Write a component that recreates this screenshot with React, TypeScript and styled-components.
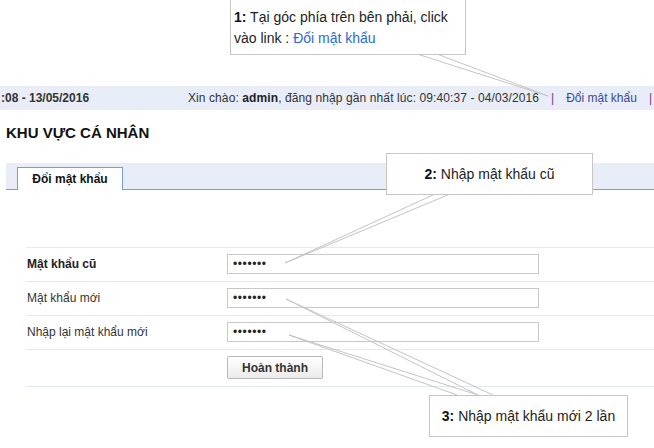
import React from "react";
import styled, { createGlobalStyle } from "styled-components";

const Global = createGlobalStyle`
  html, body { margin: 0; padding: 0; background: #fff; }
  body {
    font-family: "Liberation Sans", Arial, sans-serif;
    font-size: 12px;
    color: #333;
  }
`;

const Page = styled.div`
  position: relative;
  width: 654px;
  height: 448px;
  overflow: hidden;
  padding-top: 86px;
  box-sizing: border-box;
`;

const TopBar = styled.div`
  height: 24px;
  background: #e8edf8;
  display: flex;
  align-items: center;
  justify-content: space-between;
  padding: 0 2px 0 1px;
  white-space: nowrap;
  color: #333;
`;

const DateText = styled.span`
  font-weight: bold;
  font-size: 12px;
`;

const UserInfo = styled.div`
  display: flex;
  align-items: center;
`;

const Greeting = styled.span`
  letter-spacing: 0.1px;
`;

const Strong = styled.b`
  font-weight: bold;
  color: #222;
`;

const Sep = styled.span<{ $last?: boolean }>`
  color: #7a3a86;
  margin: ${(p) => (p.$last ? "0 0 0 12px" : "0 12px")};
`;

const TopLink = styled.a`
  color: #3a4a92;
  text-decoration: none;
`;

const Title = styled.h1`
  margin: 14px 0 0 6px;
  font-size: 15px;
  line-height: 18px;
  font-weight: bold;
  color: #111;
`;

const TabBar = styled.div`
  margin: 21px 0 0 6px;
  height: 27px;
  box-sizing: border-box;
  background: #e8edf8;
  border-bottom: 1px solid #7b9ad8;
  display: flex;
  align-items: flex-end;
  padding-left: 11px;
`;

const Tab = styled.div`
  width: 106px;
  height: 23px;
  box-sizing: border-box;
  margin-bottom: -1px;
  background: #fff;
  border: 1px solid #7b9ad8;
  border-bottom: none;
  display: flex;
  align-items: center;
  justify-content: center;
  font-weight: bold;
  color: #111;
`;

const Form = styled.div`
  margin: 57px 0 0 26px;
  border-bottom: 1px solid #e4e9f5;
`;

const Row = styled.div`
  display: grid;
  grid-template-columns: 201px 312px;
  align-items: center;
  border-top: 1px solid #e4e9f5;
  padding: 6px 0 7px;
`;

const Label = styled.label<{ $strong?: boolean }>`
  padding-left: 1px;
  font-weight: ${(p) => (p.$strong ? "bold" : "normal")};
  color: ${(p) => (p.$strong ? "#222" : "#333")};
`;

const Input = styled.input`
  width: 312px;
  height: 20px;
  box-sizing: border-box;
  border: 1px solid #c8c8c8;
  padding: 0 5px;
  margin: 0;
  font-family: "Liberation Sans", Arial, sans-serif;
  font-size: 12px;
  letter-spacing: 0.6px;
  color: #222;
  outline: none;
`;

const Button = styled.button`
  grid-column: 2;
  justify-self: start;
  width: 96px;
  height: 23px;
  border: 1px solid #b9b9b9;
  border-radius: 2px;
  background: linear-gradient(#ffffff, #ebebeb);
  font-family: "Liberation Sans", Arial, sans-serif;
  font-size: 12px;
  font-weight: bold;
  color: #333;
  padding: 0;
  cursor: pointer;
`;

const Pointers = styled.svg`
  position: absolute;
  left: 0;
  top: 0;
  pointer-events: none;
`;

const Callout = styled.div<{ $left: number; $top: number; $w: number; $h: number; $center?: boolean }>`
  position: absolute;
  left: ${(p) => p.$left}px;
  top: ${(p) => p.$top}px;
  width: ${(p) => p.$w}px;
  height: ${(p) => p.$h}px;
  box-sizing: border-box;
  background: #fff;
  border: 1px solid #c6c6c6;
  font-size: 14px;
  line-height: 21px;
  color: #222;
  white-space: nowrap;
  display: flex;
  flex-direction: column;
  justify-content: ${(p) => (p.$center ? "center" : "flex-start")};
  align-items: ${(p) => (p.$center ? "center" : "flex-start")};
  padding: ${(p) => (p.$center ? "0" : "7px 0 0 3px")};
`;

const Step = styled.b`
  font-weight: bold;
  font-size: 14px;
  color: #111;
`;

const CalloutLink = styled.span`
  color: #2a6bd2;
`;

const lines: [number, number, number, number][] = [
  [417, 54, 548, 96],
  [437, 54, 548, 96],
  [435, 194, 285, 263],
  [450, 194, 285, 263],
  [286, 299, 478, 395],
  [286, 299, 493, 395],
  [289, 335, 457, 395],
  [289, 335, 478, 395],
];

export default function App() {
  return (
    <>
      <Global />
      <Page>
        <TopBar>
          <DateText>:08 - 13/05/2016</DateText>
          <UserInfo>
            <Greeting>
              Xin chào: <Strong>admin</Strong>, đăng nhập gần nhất lúc: 09:40:37 - 04/03/2016
            </Greeting>
            <Sep>|</Sep>
            <TopLink href="#">Đổi mật khẩu</TopLink>
            <Sep $last>|</Sep>
          </UserInfo>
        </TopBar>
        <Title>KHU VỰC CÁ NHÂN</Title>
        <TabBar>
          <Tab>Đổi mật khẩu</Tab>
        </TabBar>
        <Form>
          <Row>
            <Label $strong>Mật khẩu cũ</Label>
            <Input type="password" readOnly value="1234567" />
          </Row>
          <Row>
            <Label>Mật khẩu mới</Label>
            <Input type="password" readOnly value="1234567" />
          </Row>
          <Row>
            <Label>Nhập lại mật khẩu mới</Label>
            <Input type="password" readOnly value="1234567" />
          </Row>
          <Row>
            <Button type="button">Hoàn thành</Button>
          </Row>
        </Form>

        <Pointers width="654" height="448" viewBox="0 0 654 448">
          {lines.map(([x1, y1, x2, y2], i) => (
            <line key={i} x1={x1} y1={y1} x2={x2} y2={y2} stroke="#c4c4c4" strokeWidth="1" />
          ))}
        </Pointers>

        <Callout $left={230} $top={-1} $w={236} $h={56}>
          <div>
            <Step>1:</Step> Tại góc phía trên bên phải, click
          </div>
          <div>
            vào link : <CalloutLink>Đổi mật khẩu</CalloutLink>
          </div>
        </Callout>
        <Callout $left={386} $top={153} $w={207} $h={42} $center>
          <div>
            <Step>2:</Step> Nhập mật khẩu cũ
          </div>
        </Callout>
        <Callout $left={429} $top={395} $w={199} $h={42} $center>
          <div>
            <Step>3:</Step> Nhập mật khẩu mới 2 lần
          </div>
        </Callout>
      </Page>
    </>
  );
}
